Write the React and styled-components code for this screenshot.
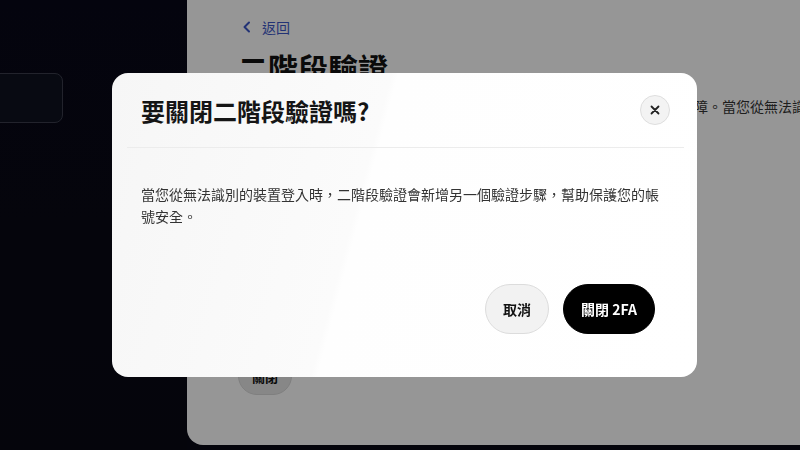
import React from "react";
import styled, { createGlobalStyle } from "styled-components";

const GlobalStyle = createGlobalStyle`
  html, body {
    margin: 0;
    padding: 0;
    background: #000;
    font-family: "Noto Sans CJK TC", "Noto Sans", "Liberation Sans", sans-serif;
  }
`;

// page underneath the dialog
const Page = styled.div`
  display: grid;
  grid-template-columns: 187px 1fr;
  width: 800px;
  height: 450px;
  overflow: hidden;
  background: #0a0a16;
`;

const Sidebar = styled.aside`
  padding: 73px 124px 0 0;
  background: linear-gradient(180deg, #080818 0%, #0a0a14 100%);
`;

const SideItem = styled.div`
  height: 48px;
  margin-left: -14px;
  border: 1px solid #3a3d4c;
  border-radius: 8px;
  background: #0f1220;
`;

const Panel = styled.main`
  height: 445px;
  box-sizing: border-box;
  padding: 17px 0 0 51px;
  background: #fff;
  border-radius: 0 0 0 16px;
  overflow: hidden;
`;

const BackLink = styled.a`
  display: flex;
  align-items: center;
  gap: 10px;
  height: 20px;
  color: #3d58c8;
  font-size: 14px;
  text-decoration: none;
  padding-left: 4px;
`;

const PageTitle = styled.h1`
  margin: 10px 0 0;
  font-size: 30px;
  line-height: 40px;
  font-weight: 700;
  color: #111;
`;

const Lead = styled.p`
  margin: 8px 0 0;
  text-indent: 8px;
  font-size: 14px;
  line-height: 22px;
  color: #333;
  white-space: nowrap;
  overflow: hidden;
`;

const GhostButton = styled.button`
  margin-top: 240px;
  height: 38px;
  padding: 0 13px;
  border-radius: 19px;
  border: 1px solid #d8d8d8;
  background: #e6e6e6;
  font-family: inherit;
  font-size: 13px;
  font-weight: 700;
  color: #111;
`;

// dialog
const Overlay = styled.div`
  position: fixed;
  inset: 0;
  background: rgba(0, 0, 0, 0.41);
  display: flex;
  align-items: center;
  justify-content: center;
`;

const Dialog = styled.div`
  width: 585px;
  height: 304px;
  box-sizing: border-box;
  margin-left: 9px;
  border-radius: 16px;
  background: linear-gradient(105deg, #f6f6f6 0%, #fbfbfb 42%, #fefefe 43%, #fff 100%);
  display: flex;
  flex-direction: column;
`;

const Header = styled.div`
  display: flex;
  align-items: center;
  justify-content: space-between;
  height: 74px;
  margin: 0 13px 0 15px;
  padding: 0 14px 0 14px;
  border-bottom: 1px solid #ececec;
`;

const Title = styled.h2`
  margin: 0;
  font-size: 24px;
  font-weight: 700;
  color: #151515;
`;

const CloseButton = styled.button`
  width: 30px;
  height: 30px;
  border-radius: 50%;
  border: 1px solid #dedede;
  background: #f3f3f3;
  display: flex;
  align-items: center;
  justify-content: center;
  padding: 0;
`;

const Body = styled.p`
  margin: 35px 29px 0;
  font-size: 14px;
  line-height: 22px;
  color: #333;
`;

const Footer = styled.div`
  margin-top: auto;
  padding: 0 42px 43px;
  display: flex;
  justify-content: flex-end;
  gap: 14px;
`;

const Pill = styled.button`
  height: 50px;
  padding: 0 17px;
  border-radius: 25px;
  border: 1px solid ${(p) => (p.$primary ? "#000" : "#dcdcdc")};
  background: ${(p) => (p.$primary ? "#000" : "#f2f2f2")};
  color: ${(p) => (p.$primary ? "#fff" : "#111")};
  font-family: inherit;
  font-size: 14px;
  font-weight: 700;
`;

const Chevron = () => (
  <svg width="10" height="12" viewBox="0 0 10 12">
    <path d="M7 1.5 L2.5 6 L7 10.5" fill="none" stroke="currentColor" strokeWidth="2" strokeLinecap="round" strokeLinejoin="round" />
  </svg>
);

const Cross = () => (
  <svg width="10" height="10" viewBox="0 0 10 10">
    <path d="M1.5 1.5 L8.5 8.5 M8.5 1.5 L1.5 8.5" stroke="#222" strokeWidth="1.8" strokeLinecap="round" />
  </svg>
);

export default function App() {
  return (
    <>
      <GlobalStyle />
      <Page>
        <Sidebar>
          <SideItem />
        </Sidebar>
        <Panel>
          <BackLink href="#">
            <Chevron />
            返回
          </BackLink>
          <PageTitle>二階段驗證</PageTitle>
          <Lead>
            使用二階段驗證為您的帳戶多加一層保障，防止他人存取您的帳戶提供保障。當您從無法識別的裝置登入時，系統會要求您輸入驗證碼。
          </Lead>
          <GhostButton>關閉</GhostButton>
        </Panel>
      </Page>
      <Overlay>
        <Dialog>
          <Header>
            <Title>要關閉二階段驗證嗎?</Title>
            <CloseButton aria-label="關閉">
              <Cross />
            </CloseButton>
          </Header>
          <Body>
            當您從無法識別的裝置登入時，二階段驗證會新增另一個驗證步驟，幫助保護您的帳號安全。
          </Body>
          <Footer>
            <Pill>取消</Pill>
            <Pill $primary>關閉 2FA</Pill>
          </Footer>
        </Dialog>
      </Overlay>
    </>
  );
}
